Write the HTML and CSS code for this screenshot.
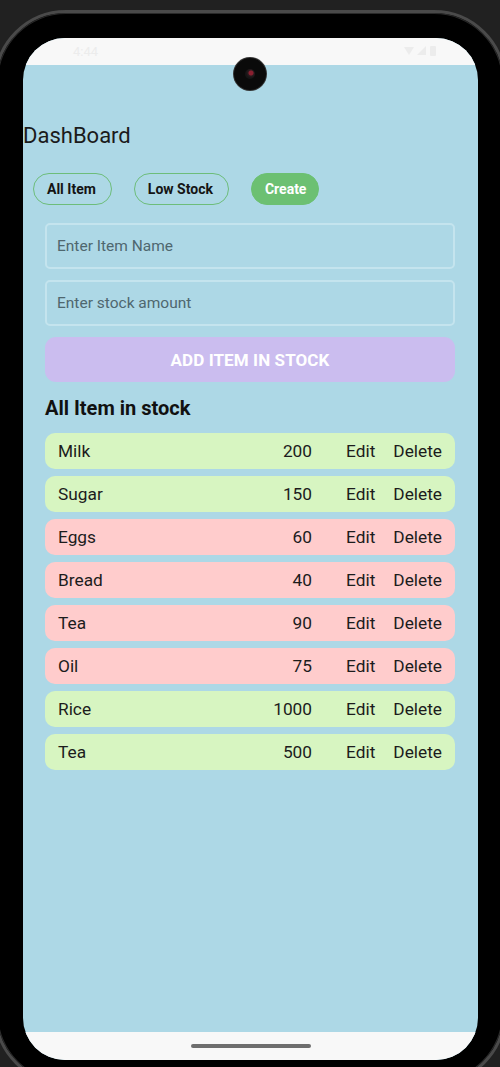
FILE: index.html
```html
<!DOCTYPE html>
<html>
<head>
<meta charset="utf-8">
<link rel="stylesheet" href="styles.css">
</head>
<body>
<div class="phone">
  <div class="screen">
    <div class="statusbar">
      <span class="time">4:44</span>
      <span class="sb-icons">
        <svg width="40" height="12" viewBox="0 0 40 12"><path d="M0 2 L10 2 L5 10 Z" fill="#ececec"/><path d="M13 10 L22 1 L22 10 Z" fill="#ececec"/><rect x="26" y="1" width="6" height="10" rx="1" fill="#ececec"/></svg>
      </span>
    </div>
    <div class="camera"><div class="lens"></div></div>
    <main class="content">
      <h1 class="title">DashBoard</h1>
      <div class="chips">
        <button class="chip">All Item</button>
        <button class="chip">Low Stock</button>
        <button class="chip chip-filled">Create</button>
      </div>
      <form class="form">
        <div class="field">Enter Item Name</div>
        <div class="field">Enter stock amount</div>
        <div class="add-btn">ADD ITEM IN STOCK</div>
      </form>
      <h2 class="section">All Item in stock</h2>
      <div class="list">
        <div class="row ok"><span class="name">Milk</span><span class="qty">200</span><span class="act edit">Edit</span><span class="act">Delete</span></div>
        <div class="row ok"><span class="name">Sugar</span><span class="qty">150</span><span class="act edit">Edit</span><span class="act">Delete</span></div>
        <div class="row low"><span class="name">Eggs</span><span class="qty">60</span><span class="act edit">Edit</span><span class="act">Delete</span></div>
        <div class="row low"><span class="name">Bread</span><span class="qty">40</span><span class="act edit">Edit</span><span class="act">Delete</span></div>
        <div class="row low"><span class="name">Tea</span><span class="qty">90</span><span class="act edit">Edit</span><span class="act">Delete</span></div>
        <div class="row low"><span class="name">Oil</span><span class="qty">75</span><span class="act edit">Edit</span><span class="act">Delete</span></div>
        <div class="row ok"><span class="name">Rice</span><span class="qty">1000</span><span class="act edit">Edit</span><span class="act">Delete</span></div>
        <div class="row ok"><span class="name">Tea</span><span class="qty">500</span><span class="act edit">Edit</span><span class="act">Delete</span></div>
      </div>
    </main>
    <div class="navbar"><div class="handle"></div></div>
  </div>
</div>
</body>
</html>
```

FILE: styles.css
```css
html, body {
  margin: 0;
  padding: 0;
  height: 100%;
  overflow: hidden;
  background: #212121;
  font-family: Roboto, "Liberation Sans", sans-serif;
}

.phone {
  position: relative;
  box-sizing: border-box;
  margin: 10px 0 0 -6px;
  width: 512px;
  height: 1075px;
  border: 3px solid #4a4a4a;
  border-radius: 72px;
  background: #000;
  padding: 25px 0 0 26px;
  box-shadow: inset 0 0 0 1px #2a2a2a;
}

.screen {
  position: relative;
  width: 455px;
  height: 1022px;
  border-radius: 42px;
  overflow: hidden;
  background: #add8e6;
  display: flex;
  flex-direction: column;
}

.statusbar {
  height: 27px;
  background: #f8f8f8;
  display: flex;
  align-items: center;
  justify-content: space-between;
  padding: 0 34px 0 50px;
  flex-shrink: 0;
}

.time {
  color: #ececec;
  font-size: 13px;
}

.camera {
  position: absolute;
  left: 211px;
  top: 20px;
  width: 32px;
  height: 32px;
  border-radius: 50%;
  background: #0a0a0a;
  box-shadow: 0 0 0 1px #333;
  display: flex;
  align-items: center;
  justify-content: center;
}

.lens {
  width: 10px;
  height: 10px;
  border-radius: 50%;
  background: radial-gradient(circle at 60% 40%, #8a2030 0 2px, #2a1a1e 3px, #151515 5px);
}

.content {
  flex: 1;
  display: flex;
  flex-direction: column;
}

.title {
  margin: 59px 0 0 0;
  font-size: 22px;
  line-height: 24px;
  font-weight: 400;
  color: #1b1b1b;
}

.chips {
  display: flex;
  gap: 22px;
  margin: 25px 0 0 10px;
}

.chip {
  height: 32px;
  box-sizing: border-box;
  border: 1px solid #6dbd7a;
  border-radius: 16px;
  background: transparent;
  font-family: Roboto, "Liberation Sans", sans-serif;
  font-weight: 700;
  font-size: 14px;
  color: #141414;
  padding: 0 15px 0 13px;
}

.chip-filled {
  background: #6cc072;
  border-color: #6cc072;
  color: #fff;
  padding: 0 12px 0 13px;
}

.form {
  margin: 18px 23px 0 22px;
  display: flex;
  flex-direction: column;
  gap: 11px;
}

.field {
  height: 46px;
  box-sizing: border-box;
  border: 2px solid #c4e4ee;
  border-radius: 5px;
  padding: 0 10px;
  display: flex;
  align-items: center;
  font-size: 15.5px;
  color: #4f676f;
}

.add-btn {
  height: 45px;
  border-radius: 11px;
  background: #cbbdef;
  color: #fff;
  font-size: 17px;
  font-weight: 700;
  display: flex;
  align-items: center;
  justify-content: center;
  letter-spacing: 0.1px;
}

.section {
  margin: 14px 0 0 22px;
  font-size: 20px;
  line-height: 25px;
  font-weight: 700;
  color: #111;
}

.list {
  margin: 12px 23px 0 22px;
  display: flex;
  flex-direction: column;
  gap: 7px;
}

.row {
  height: 36px;
  border-radius: 10px;
  display: flex;
  align-items: center;
  padding: 0 13px 0 13px;
  font-size: 17.3px;
  color: #1c1c1c;
}

.ok { background: #d7f5c1; }
.low { background: #ffcccc; }

.name { flex: 1; }

.qty {
  text-align: right;
  margin-right: 34px;
}

.edit { margin-right: 18px; }

.navbar {
  height: 28px;
  background: #f8f8f8;
  flex-shrink: 0;
  display: flex;
  justify-content: center;
  padding-top: 12px;
  box-sizing: border-box;
}

.handle {
  width: 120px;
  height: 4px;
  border-radius: 2px;
  background: #6e6e6e;
}
```
